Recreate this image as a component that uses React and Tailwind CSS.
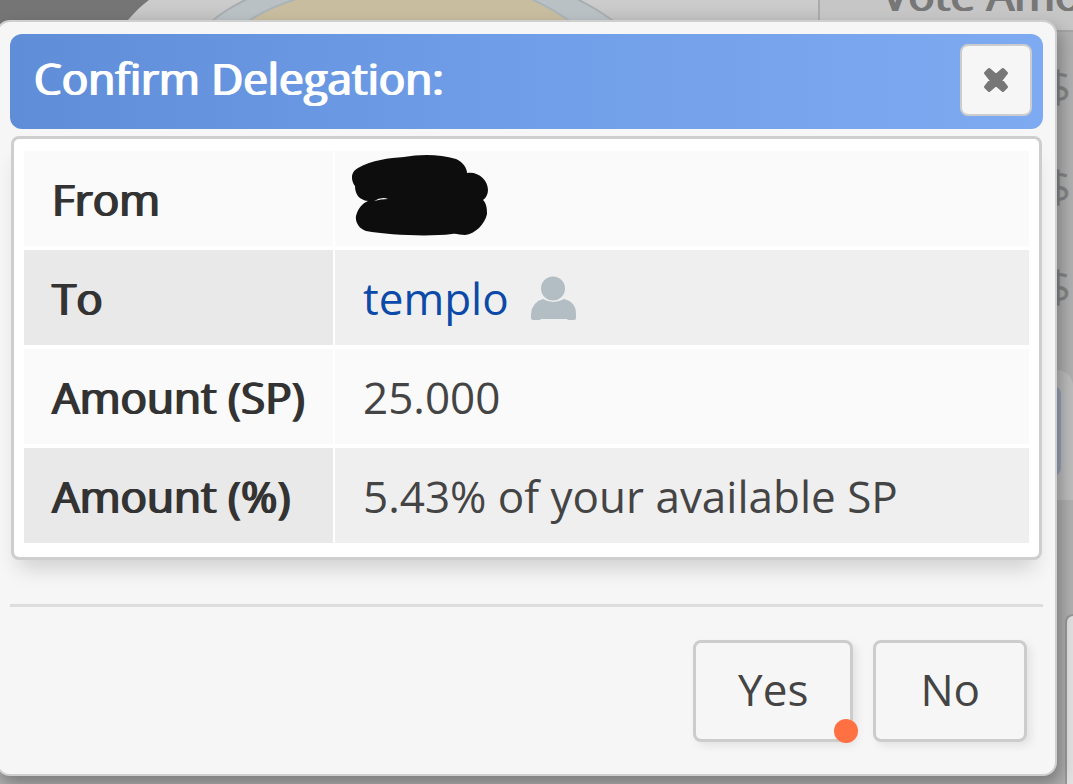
import React, { useState } from 'react';

// logo and header art that sits behind the dialog
function HeaderArt() {
  return (
    <svg className="h-8 min-w-0 flex-1" viewBox="0 0 818 32" preserveAspectRatio="xMinYMin slice" aria-hidden="true">
      <defs>
        <linearGradient id="grey" x1="0" y1="0" x2="0" y2="1">
          <stop offset="0" stopColor="#cdcdcd" />
          <stop offset="0.6" stopColor="#c2c2c2" />
          <stop offset="1" stopColor="#b0b0b0" />
        </linearGradient>
      </defs>
      <rect width="818" height="32" fill="url(#grey)" />
      <path d="M0 0H149Q138 8 128 20L118 32H0Z" fill="#757575" />
      <path d="M262 -8Q230 6 212 21L200 32H630L612 20Q590 4 562 -8Z" fill="#b9c1c5" stroke="#a9adb0" strokeWidth="2" />
      <path d="M320 -8Q274 4 250 20L236 32H586L568 20Q546 4 514 -8Z" fill="#c9bd9f" stroke="#a9b3b8" strokeWidth="2" />
    </svg>
  );
}

function CloseIcon() {
  return (
    <svg className="size-7" viewBox="0 0 28 28" aria-hidden="true">
      <path
        d="M7 3.5L14 9.5L21 3.5L24.5 7L19 14L24.5 21L21 24.5L14 18.5L7 24.5L3.5 21L9 14L3.5 7Z"
        fill="#777"
        stroke="#777"
        strokeWidth="3"
        strokeLinejoin="round"
      />
    </svg>
  );
}

function UserIcon() {
  return (
    <svg className="h-11 w-[46px]" viewBox="0 0 46 44" fill="#b3bdc4" aria-hidden="true">
      <circle cx="22" cy="12.5" r="12" />
      <path d="M12 23Q17 26 22.5 26T33 23Q45 26 45 38V42Q45 44 43 44H37L36 43H10L9 44H2Q0 44 0 42V38Q1 26 12 23Z" />
    </svg>
  );
}

function Scribble() {
  return (
    <svg className="-ml-3 h-[92px] w-[140px]" viewBox="351 153 140 92" role="img" aria-label="Hidden name">
      <path
        d="M358 168C372 160 389 158 404 157C420 154 440 154 456 159C463 162 467 168 467 173C478 171 488 180 488 190C488 194 486 198 483 200C487 204 487 210 487 214C485 224 475 234 465 235C460 235 456 233 452 234C428 237 388 235 366 231C359 229 355 222 356 216C358 208 363 203 368 201C359 200 355 194 355 186C351 181 350 172 358 168Z"
        fill="#0d0d0d"
      />
      <path d="M374 201Q382 196 388 199Q381 199 374 201Z" fill="#fafafa" />
    </svg>
  );
}

const rows = [
  { label: 'From', value: <Scribble /> },
  {
    label: 'To',
    value: (
      <div className="flex items-center gap-[22px]">
        <a href="#templo" className="text-[#0b4aa8]">templo</a>
        <UserIcon />
      </div>
    ),
  },
  { label: 'Amount (SP)', value: '25.000' },
  { label: 'Amount (%)', value: '5.43% of your available SP' },
];

function DelegationTable() {
  return (
    <table className="w-full border-separate border-spacing-x-[2px] border-spacing-y-[4px]">
      <tbody>
        {rows.map((row) => (
          <tr key={row.label} className="group h-[95px]">
            <th
              scope="row"
              className="w-[309px] whitespace-nowrap bg-[#fafafa] p-0 pl-7 text-left font-normal text-[#333] [text-shadow:1px_0_#333,-1px_0_#333] group-even:bg-[#e9e9e9]"
            >
              {row.label}
            </th>
            <td className="bg-[#fafafa] p-0 pl-7 group-even:bg-[#efefef]">{row.value}</td>
          </tr>
        ))}
      </tbody>
    </table>
  );
}

function ConfirmDialog({ onClose }) {
  return (
    <div
      role="dialog"
      aria-labelledby="dialog-title"
      className="absolute -left-1 right-4 top-5 rounded-[14px] border-2 border-[#cfcfcf] bg-[#f6f6f6] p-3 shadow-[4px_8px_16px_rgba(0,0,0,0.3)]"
    >
      <div className="flex h-[95px] items-start justify-between rounded-xl bg-linear-to-r from-[#5f8dd8] via-[#709ee8] to-[#7eaaf1] pl-6 pr-[11px] pt-2.5">
        <h2 id="dialog-title" className="pt-1 text-white [text-shadow:1px_0_#fff,-1px_0_#fff]">Confirm Delegation:</h2>
        <button
          type="button"
          aria-label="Close"
          onClick={onClose}
          className="flex size-[72px] items-center justify-center rounded-lg border-2 border-[#ccc] bg-[#f6f6f6]"
        >
          <CloseIcon />
        </button>
      </div>

      <div className="mx-px mt-[7px] rounded-lg border-3 border-[#cecece] bg-white px-2 pb-2.5 pt-2 shadow-[0_16px_20px_-8px_rgba(0,0,0,0.16)]">
        <DelegationTable />
      </div>

      <div className="mt-11 flex justify-end gap-5 border-t-3 border-[#ddd] pb-5 pr-4 pt-[33px]">
        <button
          type="button"
          onClick={onClose}
          className="relative h-[102px] rounded-lg border-3 border-[#ccc] px-[42px] pb-1 shadow-[4px_4px_8px_rgba(0,0,0,0.08)]"
        >
          Yes
          <span className="absolute -bottom-1 -right-2 size-6 rounded-full bg-[#ff7043]" />
        </button>
        <button
          type="button"
          onClick={onClose}
          className="h-[102px] rounded-lg border-3 border-[#ccc] px-11 pb-1 shadow-[4px_4px_8px_rgba(0,0,0,0.08)]"
        >
          No
        </button>
      </div>
    </div>
  );
}

function App() {
  const [open, setOpen] = useState(true);

  return (
    <div className="relative min-h-screen overflow-hidden bg-[#b0b0b0] font-['Open_Sans','Noto_Sans',sans-serif] text-[44px] leading-[60px] text-[#444]">
      <div className="flex h-8 overflow-hidden border-b-2 border-[#a5a5a5]">
        <HeaderArt />
        <div className="-mt-9 w-[255px] overflow-hidden whitespace-nowrap border-l-2 border-[#aaa] bg-[#c6c6c6] pl-[62px] text-[#777] [text-shadow:1px_0_#777,-1px_0_#777]">
          Vote Amount
        </div>
      </div>
      <div className="flex flex-col items-end pr-0.5 pt-6 text-[#858585]">
        <span className="h-[100px]">$</span>
        <span className="h-[100px]">$</span>
        <span className="h-[100px]">$</span>
      </div>
      <div className="ml-auto mt-3.5 h-[130px] w-[60px] rounded-tr-2xl bg-[#bdbdbd] py-4 pr-3">
        <div className="h-[90px] rounded-r-lg bg-[#9ba2bb]" />
      </div>
      <div className="ml-auto mt-[114px] h-[170px] w-2 rounded-tl-xl border-l-2 border-t-2 border-[#999] bg-[#e2e2e2]" />

      {open && <ConfirmDialog onClose={() => setOpen(false)} />}
    </div>
  );
}

export default App;
